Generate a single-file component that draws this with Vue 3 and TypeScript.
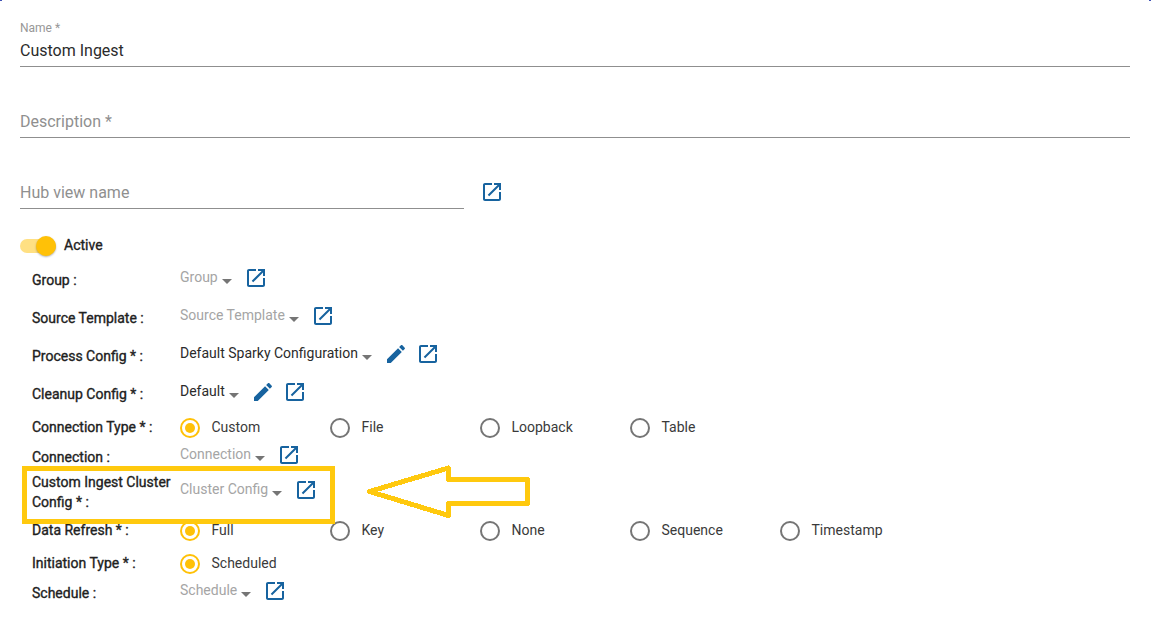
<script setup lang="ts">
interface Row {
  label: string
  height: number
  value?: string
  filled?: boolean
  edit?: boolean
  options?: string[]
}

const rows: Row[] = [
  { label: 'Group :', height: 38, value: 'Group' },
  { label: 'Source Template :', height: 38, value: 'Source Template' },
  { label: 'Process Config * :', height: 38, value: 'Default Sparky Configuration', filled: true, edit: true },
  { label: 'Cleanup Config * :', height: 38, value: 'Default', filled: true, edit: true },
  { label: 'Connection Type * :', height: 29, options: ['Custom', 'File', 'Loopback', 'Table'] },
  { label: 'Connection :', height: 30, value: 'Connection' },
  { label: 'Custom Ingest Cluster Config * :', height: 40, value: 'Cluster Config' },
  { label: 'Data Refresh * :', height: 37, options: ['Full', 'Key', 'None', 'Sequence', 'Timestamp'] },
  { label: 'Initiation Type * :', height: 30, options: ['Scheduled'] },
  { label: 'Schedule :', height: 28, value: 'Schedule' },
]

const openPath =
  'M19 19H5V5h7V3H5c-1.11 0-2 .9-2 2v14c0 1.1.89 2 2 2h14c1.1 0 2-.9 2-2v-7h-2v7zM14 3v2h3.59l-9.83 9.83 1.41 1.41L19 6.41V10h2V3h-7z'
const editPath =
  'M3 17.25V21h3.75L17.81 9.94l-3.75-3.75L3 17.25zM20.71 7.04c.39-.39.39-1.02 0-1.41l-2.34-2.34c-.39-.39-1.02-.39-1.41 0l-1.83 1.83 3.75 3.75 1.83-1.83z'
</script>

<template>
  <main class="page">
    <i class="corner left"></i>
    <i class="corner right"></i>
    <div class="field name">
      <span class="float">Name *</span>
      <span class="text">Custom Ingest</span>
    </div>
    <div class="field description"><span class="hint">Description *</span></div>
    <div class="hub">
      <div class="field"><span class="hint">Hub view name</span></div>
      <svg class="icon" viewBox="0 0 24 24"><path :d="openPath" /></svg>
    </div>
    <div class="toggle">
      <span class="track"><span class="thumb"></span></span>
      <span class="strong active">Active</span>
    </div>
    <div v-for="row in rows" :key="row.label" class="row" :style="{ height: row.height + 'px' }">
      <span class="strong label" :class="{ raised: row.options }">{{ row.label }}</span>
      <div v-if="row.options" class="options">
        <span v-for="(option, i) in row.options" :key="option" class="option">
          <span class="radio" :class="{ on: i === 0 }"></span>
          <span class="caption">{{ option }}</span>
        </span>
      </div>
      <div v-else class="select">
        <span class="value" :class="{ filled: row.filled }">{{ row.value }}</span>
        <i class="caret"></i>
        <svg v-if="row.edit" class="icon edit" viewBox="0 0 24 24"><path :d="editPath" /></svg>
        <svg class="icon" viewBox="0 0 24 24"><path :d="openPath" /></svg>
      </div>
    </div>
    <div class="highlight"></div>
    <svg class="arrow" width="166" height="56" viewBox="0 0 166 56" shape-rendering="crispEdges">
      <path d="M4.500 27.500 83.500 4V15.500H162.500V39.500H83.500V51.500Z" />
    </svg>
  </main>
</template>

<style>
body {
  background: #fff;
}
</style>

<style scoped>
.page {
  position: relative;
  box-sizing: border-box;
  height: 619px;
  padding-left: 20px;
  overflow: hidden;
  background: #fff;
  font-family: Roboto, "Liberation Sans", sans-serif;
  font-size: 14px;
  color: #2b2b2b;
}
.corner {
  position: absolute;
  top: 0;
  width: 2px;
  height: 1px;
  background: #3f51b5;
}
.corner.left { left: 0; }
.corner.right { right: 0; }
.field {
  box-sizing: border-box;
  display: flex;
  flex-direction: column;
  justify-content: flex-end;
  width: 1110px;
  border-bottom: 1px solid #8f8f8f;
}
.name { height: 67px; }
.description { height: 71px; }
.float {
  height: 14px;
  line-height: 14px;
  font-size: 12px;
  color: #979797;
  margin-bottom: 6px;
}
.text, .hint {
  line-height: 20px;
  font-size: 16px;
  margin-bottom: 5px;
}
.hint { color: #8f8f8f; }
.hub {
  display: flex;
  align-items: flex-end;
  height: 71px;
}
.hub .field { width: 444px; height: 71px; }
.hub .icon { margin: 0 0 5px 16px; }
.toggle {
  display: flex;
  align-items: center;
  height: 52px;
  padding-top: 21px;
  box-sizing: border-box;
}
.track {
  display: flex;
  align-items: center;
  justify-content: flex-end;
  width: 36px;
  height: 14px;
  margin-top: 1px;
  border-radius: 7px;
  background: #ffe083;
}
.thumb {
  width: 20px;
  height: 20px;
  border-radius: 50%;
  background: #ffc107;
  box-shadow: 0 1px 2px rgba(0, 0, 0, 0.3);
}
.active { margin: -2px 0 0 8px; }
.strong {
  line-height: 20px;
  color: #212121;
  -webkit-text-stroke: 0.35px #212121;
}
.row {
  display: flex;
  align-items: center;
  padding-left: 12px;
}
.label {
  flex: none;
  width: 148px;
}
.raised { margin-top: -2px; }
.options { display: flex; }
.option {
  display: flex;
  align-items: center;
  width: 150px;
}
.radio {
  display: grid;
  place-items: center;
  box-sizing: border-box;
  width: 20px;
  height: 20px;
  border: 2px solid #757575;
  border-radius: 50%;
}
.radio.on { border-color: #ffc107; }
.radio.on::after {
  content: "";
  width: 10px;
  height: 10px;
  border-radius: 50%;
  background: #ffc107;
}
.caption {
  margin: -2px 0 0 11.5px;
  line-height: 20px;
  color: #3a3a3a;
}
.select {
  display: flex;
  align-items: center;
  height: 24px;
  margin-top: -4px;
}
.value {
  line-height: 20px;
  margin-top: -2px;
  color: #a5a5a5;
}
.value.filled { color: #2b2b2b; }
.caret {
  margin: 6px 12px 0 4px;
  border: 5px solid transparent;
  border-top-color: #757575;
  border-bottom: 0;
}
.icon {
  display: block;
  flex: none;
  width: 24px;
  height: 24px;
  fill: #17639f;
}
.edit { margin-right: 8px; }
.highlight {
  position: absolute;
  left: 22px;
  top: 466px;
  box-sizing: border-box;
  width: 313px;
  height: 58px;
  border: 5px solid #ffc90e;
}
.arrow {
  position: absolute;
  left: 365px;
  top: 464px;
  fill: none;
  stroke: #ffc90e;
  stroke-width: 5;
  stroke-linejoin: round;
}
</style>
